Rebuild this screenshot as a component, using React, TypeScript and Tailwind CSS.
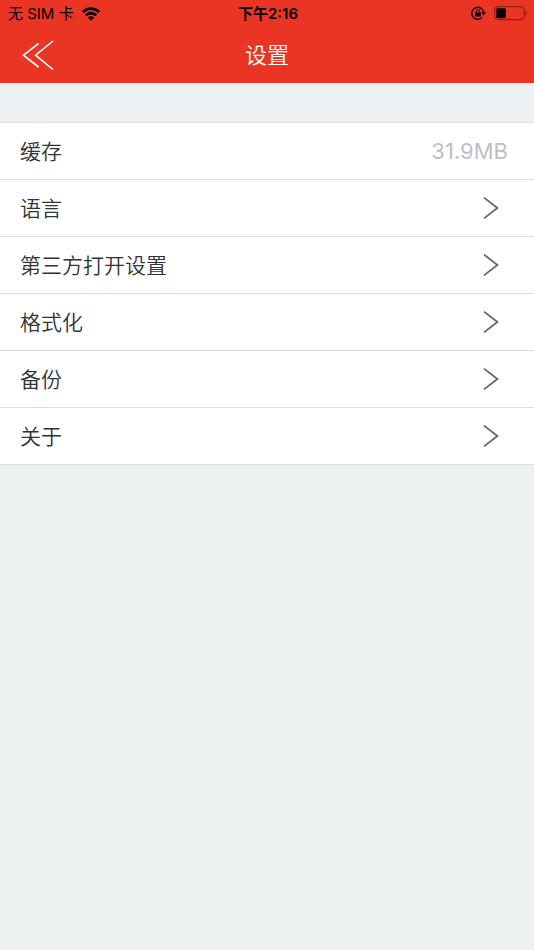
const items = ["语言", "第三方打开设置", "格式化", "备份", "关于"];

function WifiIcon() {
  return (
    <svg width="18" height="14" viewBox="0 0 18 14" fill="none" stroke="#000" strokeWidth="2.7" aria-hidden="true">
      <path d="M0.9 5C5.4 0.4 12.6 0.4 17.1 5" />
      <path d="M3.9 8.4C6.8 5.4 11.2 5.4 14.1 8.4" />
      <path d="M5.8 10.5C7.6 8.9 10.4 8.9 12.2 10.5L9 13.8Z" fill="#000" stroke="none" />
    </svg>
  );
}

function RotationLockIcon() {
  return (
    <svg width="15" height="16" viewBox="0 0 15 16" fill="none" stroke="#000" aria-hidden="true">
      <path d="M11.2 11.4A6 6 0 1 1 12.8 6.7" strokeWidth="1.3" />
      <path d="M10.2 6.3H15L12.6 9.4Z" fill="#000" stroke="none" />
      <rect x="4.2" y="6.4" width="5.6" height="4.2" rx="0.6" fill="#000" stroke="none" />
      <path d="M5.4 6.7V5.1a1.6 1.6 0 0 1 3.2 0V6.7" strokeWidth="1" />
    </svg>
  );
}

function BatteryIcon() {
  return (
    <svg width="34" height="16" viewBox="0 0 34 16" fill="none" aria-hidden="true">
      <rect x="0.7" y="0.7" width="29.4" height="13" rx="3.6" stroke="#8f2117" strokeWidth="1.2" />
      <rect x="2.3" y="2.2" width="9.4" height="10" rx="1.4" fill="#000" />
      <path d="M31.4 5C33.2 5.6 33.2 9 31.4 9.6Z" fill="#7d1c13" />
    </svg>
  );
}

function Chevron() {
  return (
    <svg width="16" height="24" viewBox="0 0 16 24" fill="none" stroke="#666" strokeWidth="1.8" aria-hidden="true">
      <path d="M1 1.6L14.4 12L1 22.4" />
    </svg>
  );
}

export default function App() {
  return (
    <div className="min-h-screen bg-[#ecf0f1] font-['Inter','Noto_Sans_CJK_SC',sans-serif] text-[#333]">
      <header className="bg-[#ea3524]">
        <div className="grid h-7 grid-cols-3 items-center pr-1.5 pl-2 text-[15px] leading-7 text-black">
          <div className="flex items-center gap-2">
            <span>无 SIM 卡</span>
            <WifiIcon />
          </div>
          <span className="text-center font-semibold">下午2:16</span>
          <div className="flex items-center justify-end gap-2">
            <RotationLockIcon />
            <BatteryIcon />
          </div>
        </div>

        <div className="grid h-[55px] grid-cols-3 items-center">
          <button type="button" aria-label="返回" className="justify-self-start pl-[22px]">
            <svg width="32" height="32" viewBox="0 0 32 32" fill="none" stroke="#fff" strokeWidth="1.6">
              <path d="M16.5 3.5L1.5 15.2L16.5 27" />
              <path d="M31 1L13.6 15.2L31 29.5" />
            </svg>
          </button>
          <h1 className="text-center text-[22px] font-[350] text-white">设置</h1>
        </div>
      </header>

      <main className="pt-[39px]">
        <ul className="border-t border-[#dcdfe0] bg-white text-[21px] font-[350]">
          <li className="flex h-[57px] items-center justify-between border-b border-[#dcdfe0] pr-[26px] pl-5">
            <span className="pt-0.5">缓存</span>
            <span className="text-[22px] font-normal text-[#bcc0c6]">31.9MB</span>
          </li>
          {items.map((label) => (
            <li key={label} className="border-b border-[#dcdfe0]">
              <button type="button" className="flex h-14 w-full items-center justify-between pr-[35px] pl-5">
                <span className="pt-0.5">{label}</span>
                <Chevron />
              </button>
            </li>
          ))}
        </ul>
      </main>
    </div>
  );
}
